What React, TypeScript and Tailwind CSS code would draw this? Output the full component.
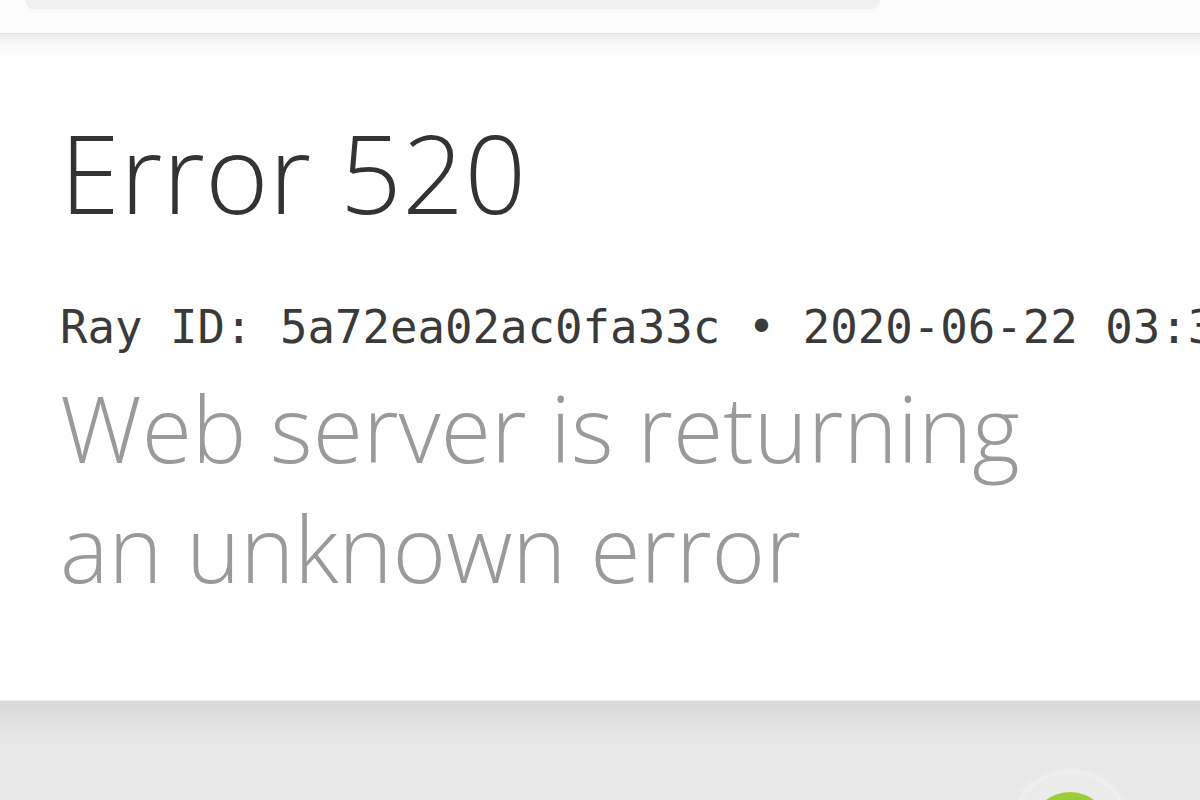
export default function App() {
  return (
    <div className="w-[1200px] h-[800px] overflow-hidden bg-white flex flex-col">
      {/* top strip, bottom of the site header */}
      <div className="h-[34px] shrink-0 bg-[#fdfdfd] border-b border-[#e3e3e3]">
        <div className="ml-[25px] w-[855px] h-[9px] rounded-b-[22px] bg-[#f0f0f2] shadow-[0_2px_6px_rgba(0,0,0,0.03)]" />
      </div>

      <main className="h-[666px] shrink-0 px-[60px] pt-[74px] bg-[linear-gradient(#ececec,#fafafa_12px,#ffffff_24px)]">
        <h1
          className="text-[108px] leading-[130px] font-light text-[#333333] tracking-[0.5px]"
          style={{ fontFamily: '"Open Sans", sans-serif' }}
        >
          Error 520
        </h1>
        {/* runs off the right edge of the page, like the reference */}
        <div className="mt-[63px] -mr-[60px] overflow-hidden">
          <p
            className="text-[45.7px] leading-[54px] text-[#3a3a3a] whitespace-nowrap"
            style={{ fontFamily: '"DejaVu Sans Mono", monospace' }}
          >
            Ray ID: 5a72ea02ac0fa33c • 2020-06-22 03:31:04 UTC
          </p>
        </div>
        <h2
          className="mt-[13px] text-[91.5px] leading-[120px] font-light text-[#9a9a9a]"
          style={{ fontFamily: '"Open Sans", sans-serif' }}
        >
          Web server is returning
          <br />
          an unknown error
        </h2>
      </main>

      <section className="relative flex-1 border-t border-[#efefef] bg-[linear-gradient(#d9d9d9,#e4e4e4_30px,#e8e8e8_50px)]">
        <div className="absolute left-[1012px] top-[72px] w-[116px] h-[116px] rounded-full bg-[#ececec] shadow-[0_0_10px_rgba(255,255,255,0.9)]" />
        <div className="absolute left-[1030px] top-[91px] w-[80px] h-[80px] rounded-full bg-[linear-gradient(#9fcd3a,#7fb52c)]" />
      </section>
    </div>
  );
}
